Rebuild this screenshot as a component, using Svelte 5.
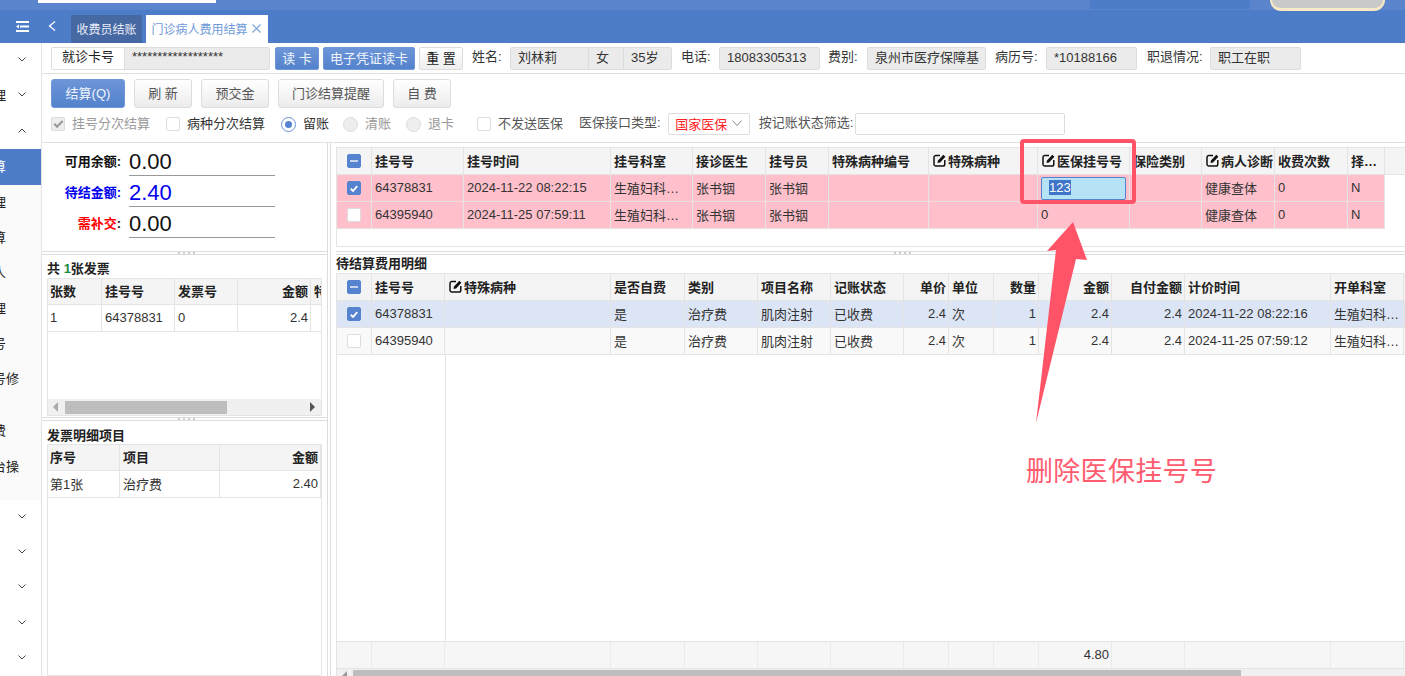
<script>
  const topCols = [
    { t: '挂号号' }, { t: '挂号时间' }, { t: '挂号科室' }, { t: '接诊医生' }, { t: '挂号员' },
    { t: '特殊病种编号' }, { t: '特殊病种', edit: true }, { t: '医保挂号号', edit: true },
    { t: '保险类别' }, { t: '病人诊断', edit: true }, { t: '收费次数' }, { t: '择…' }
  ];
  const topRows = [
    { checked: true, cells: ['64378831', '2024-11-22 08:22:15', '生殖妇科…', '张书铟', '张书铟', '', '', '@', '', '健康查体', '0', 'N'] },
    { checked: false, cells: ['64395940', '2024-11-25 07:59:11', '生殖妇科…', '张书铟', '张书铟', '', '', '0', '', '健康查体', '0', 'N'] }
  ];
  const feeCols = [
    { t: '挂号号' }, { t: '特殊病种', edit: true }, { t: '是否自费' }, { t: '类别' }, { t: '项目名称' }, { t: '记账状态' },
    { t: '单价', r: true }, { t: '单位' }, { t: '数量', r: true }, { t: '金额', r: true }, { t: '自付金额', r: true },
    { t: '计价时间' }, { t: '开单科室' }
  ];
  const feeRows = [
    { checked: true, cells: ['64378831', '', '是', '治疗费', '肌肉注射', '已收费', '2.4', '次', '1', '2.4', '2.4', '2024-11-22 08:22:16', '生殖妇科…'] },
    { checked: false, cells: ['64395940', '', '是', '治疗费', '肌肉注射', '已收费', '2.4', '次', '1', '2.4', '2.4', '2024-11-25 07:59:12', '生殖妇科…'] }
  ];
  const footer = ['', '', '', '', '', '', '', '', '', '', '4.80', '', '', ''];
  const invCols = [{ t: '张数' }, { t: '挂号号' }, { t: '发票号' }, { t: '金额', r: true }, { t: '特' }];
  const invRow = [{ t: '1' }, { t: '64378831' }, { t: '0' }, { t: '2.4', r: true }, { t: '' }];
  const detCols = [{ t: '序号' }, { t: '项目' }, { t: '金额', r: true }];
  const detRow = [{ t: '第1张' }, { t: '治疗费' }, { t: '2.40', r: true }];
  const side1 = [{ c: 'down' }, { c: 'down', t: '理' }, { c: 'up' }];
  const sub = ['理', '算', '人', '理', '号', '号修'];
  const side2 = [1, 2, 3, 4, 5];
</script>

{#snippet editIcon()}
  <svg class="edit" viewBox="0 0 13 13" width="13" height="13" aria-hidden="true">
    <path d="M7 1.500H3A1.800 1.800 0 0 0 1 3.300v6.900A1.800 1.800 0 0 0 3 12h7a1.800 1.800 0 0 0 1.800-1.800V6" fill="none" stroke="#111" stroke-width="1.500"/>
    <path d="M5 6.500 10.300.8l2.100 2-5.300 5.600-2.600.6z" fill="#111"/>
  </svg>
{/snippet}

{#snippet chk(state)}
  <span class="chk {state}">
    {#if state === 'on'}
      <svg viewBox="0 0 13 13" width="13" height="13" aria-hidden="true"><path d="M3 6.800 5.500 9.200 10 4" fill="none" stroke="#fff" stroke-width="2"/></svg>
    {:else if state === 'mix'}
      <i class="dash"></i>
    {/if}
  </span>
{/snippet}

{#snippet chev(dir)}
  <svg class="chev" viewBox="0 0 8 5" width="8" height="5" aria-hidden="true">
    {#if dir === 'up'}
      <path d="M.5 4.500 4 1l3.500 3.500" fill="none" stroke="#444" stroke-width="1"/>
    {:else}
      <path d="M.5.500 4 4 7.500.500" fill="none" stroke="#444" stroke-width="1"/>
    {/if}
  </svg>
{/snippet}

{#snippet split()}
  <div class="hsplit"><i></i><i></i><i></i><i></i></div>
{/snippet}

<div class="page">
  <header class="top">
    <div class="strip">
      <i class="sliver"></i>
      <i class="darkseg"></i>
      <i class="cream"></i>
    </div>
    <div class="tabsrow">
      <svg class="menu" viewBox="0 0 13 11" width="13" height="11" aria-hidden="true">
        <path d="M0 1h13M4 5.500h9M0 10h13" stroke="#fff" stroke-width="2"/>
        <path d="M3 3.500 0 5.500l3 2z" fill="#fff"/>
      </svg>
      <svg class="back" viewBox="0 0 8 10" width="8" height="10" aria-hidden="true"><path d="M7 .5 1.500 5 7 9.500" fill="none" stroke="#fff" stroke-width="1.300"/></svg>
      <div class="tab dark">收费员结账</div>
      <div class="tab on">门诊病人费用结算
        <svg viewBox="0 0 9 9" width="9" height="9" aria-hidden="true"><path d="M.5.500l8 8M8.500.500l-8 8" stroke="#7ba3dd" stroke-width="1.200"/></svg>
      </div>
    </div>
  </header>

  <div class="body">
    <nav class="side">
      {#each side1 as s}
        <div class="srow">
          {#if s.t}<span class="stext">{s.t}</span>{/if}
          {@render chev(s.c)}
        </div>
      {/each}
      <div class="subs">
        <div class="srow active"><span class="stext">算</span></div>
        {#each sub as s}
          <div class="srow"><span class="stext">{s}</span></div>
        {/each}
        <div class="sgap"></div>
        <div class="srow"><span class="stext">费</span></div>
        <div class="srow"><span class="stext">台操</span></div>
      </div>
      {#each side2 as _}
        <div class="srow">{@render chev('down')}</div>
      {/each}
    </nav>

    <main class="main">
      <div class="row1">
        <div class="group card">
          <span class="glabel">就诊卡号</span>
          <span class="gval stars">******************</span>
        </div>
        <button class="mini blue b44">读 卡</button>
        <button class="mini blue b92">电子凭证读卡</button>
        <button class="mini b44">重 置</button>
        <span class="lab l38 first">姓名:</span>
        <div class="group person">
          <span class="gval p1">刘林莉</span><span class="gval p2">女</span><span class="gval p3">35岁</span>
        </div>
        <span class="lab l38 next">电话:</span>
        <span class="gval solo f101">18083305313</span>
        <span class="lab l39 next8">费别:</span>
        <span class="gval solo f119">泉州市医疗保障基</span>
        <span class="lab l51 next">病历号:</span>
        <span class="gval solo f91">*10188166</span>
        <span class="lab l63 next10">职退情况:</span>
        <span class="gval solo f91">职工在职</span>
      </div>

      <div class="tools">
        <div class="btns">
          <button class="big blue b74">结算(Q)</button>
          <button class="big b58">刷 新</button>
          <button class="big b68">预交金</button>
          <button class="big b106">门诊结算提醒</button>
          <button class="big b58">自 费</button>
        </div>
        <div class="opts">
          <span class="opt gray m16">{@render chk('dis')}挂号分次结算</span>
          <span class="opt m16">{@render chk('off')}病种分次结算</span>
          <span class="opt m14"><i class="radio sel"></i>留账</span>
          <span class="opt gray m15"><i class="radio"></i>清账</span>
          <span class="opt gray m23"><i class="radio"></i>退卡</span>
          <span class="opt m16 mid">{@render chk('off')}不发送医保</span>
          <span class="lab mid">医保接口类型:</span>
          <span class="select">国家医保
            <svg viewBox="0 0 10 6" width="10" height="6" aria-hidden="true"><path d="M.5.500 5 5.500 9.500.500" fill="none" stroke="#888" stroke-width="1"/></svg>
          </span>
          <span class="lab mid fl">按记账状态筛选:</span>
          <span class="txtinput"></span>
        </div>
      </div>

      <div class="panes">
        <section class="left">
          <div class="amounts">
            <div class="amt"><span class="al">可用余额:</span><span class="av">0.00</span></div>
            <div class="amt bl"><span class="al">待结金额:</span><span class="av">2.40</span></div>
            <div class="amt rd"><span class="al"><em>需补交</em>:</span><span class="av">0.00</span></div>
          </div>
          {@render split()}

          <div class="inv">
            <h3>共 <b>1</b>张发票</h3>
            <div class="ltable">
              <div class="lrow lhead invg">
                {#each invCols as c}<span class="c" class:r={c.r}>{c.t}</span>{/each}
              </div>
              <div class="lrow invg">
                {#each invRow as c}<span class="c" class:r={c.r}>{c.t}</span>{/each}
              </div>
              <div class="lfill"></div>
              <div class="lscroll">
                <svg viewBox="0 0 6 10" width="6" height="10" aria-hidden="true"><path d="M5 0 0 5l5 5z" fill="#aaa"/></svg>
                <i class="thumb"></i>
                <svg class="ra" viewBox="0 0 6 10" width="6" height="10" aria-hidden="true"><path d="M1 0l5 5-5 5z" fill="#555"/></svg>
              </div>
            </div>
          </div>
          {@render split()}

          <div class="det">
            <h3>发票明细项目</h3>
            <div class="ltable grow">
              <div class="lrow lhead detg">
                {#each detCols as c}<span class="c" class:r={c.r}>{c.t}</span>{/each}
              </div>
              <div class="lrow detg">
                {#each detRow as c}<span class="c" class:r={c.r}>{c.t}</span>{/each}
              </div>
            </div>
          </div>
        </section>

        <div class="vsplit"></div>

        <section class="right">
          <div class="upper">
            <div class="grid-wrap">
              <div class="ghead topg">
                <span class="c cb">{@render chk('mix')}</span>
                {#each topCols as c}
                  <span class="c">{#if c.edit}{@render editIcon()}{/if}{c.t}</span>
                {/each}
              </div>
              {#each topRows as r}
                <div class="grow-r topg pink">
                  <span class="c cb">{@render chk(r.checked ? 'on' : 'off')}</span>
                  {#each r.cells as v}
                    {#if v === '@'}
                      <span class="c edit-cell"><span class="editor"><mark>123</mark></span></span>
                    {:else}
                      <span class="c">{v}</span>
                    {/if}
                  {/each}
                </div>
              {/each}
            </div>
          </div>
          {@render split()}

          <div class="lower">
            <h3>待结算费用明细</h3>
            <div class="fee">
              <div class="ghead feeg">
                <span class="c cb">{@render chk('mix')}</span>
                {#each feeCols as c}
                  <span class="c" class:r={c.r}>{#if c.edit}{@render editIcon()}{/if}{c.t}</span>
                {/each}
              </div>
              {#each feeRows as r}
                <div class="grow-r feeg" class:sel={r.checked} class:alt={!r.checked}>
                  <span class="c cb">{@render chk(r.checked ? 'on' : 'off')}</span>
                  {#each r.cells as v, i}
                    <span class="c" class:r={feeCols[i].r}>{v}</span>
                  {/each}
                </div>
              {/each}
              <div class="feefill"><i></i></div>
              <div class="gfoot feeg">
                {#each footer as v}
                  <span class="c r">{v}</span>
                {/each}
              </div>
              <div class="bscroll">
                <svg viewBox="0 0 5 5" width="5" height="5" aria-hidden="true"><path d="M5 0v5H0z" fill="#999"/></svg>
                <i></i>
              </div>
            </div>
          </div>
        </section>
      </div>
    </main>
  </div>

  <div class="mark-box"></div>
  <svg class="arrow" viewBox="0 0 1405 676" width="1405" height="676" aria-hidden="true">
    <path d="M1073 222 1087 260 1076 259 1036 423 1056 250 1047 251z" fill="#ff5468"/>
  </svg>
  <div class="note">删除医保挂号号</div>
</div>

<style>
  :global(body) { margin: 0; overflow: hidden; background: #fff; }
  * { box-sizing: border-box; }
  .page {
    position: relative; width: 1405px; height: 676px; overflow: hidden; display: flex; flex-direction: column;
    font-family: "Liberation Sans", "Noto Sans CJK SC", sans-serif; font-size: 13px; color: #333;
  }
  h3 { margin: 0; font-size: 13px; line-height: 16px; font-weight: 700; color: #222; }

  .top { height: 43px; flex: none; background: #4d7dc9; }
  .strip { height: 10px; background: #5a85cd; display: flex; align-items: flex-start; }
  .sliver { width: 178px; height: 3px; margin-left: 38px; background: #fff; }
  .darkseg { width: 160px; height: 9px; margin-left: 874px; background: #4d7dc9; }
  .cream {
    width: 115px; height: 11px; margin-left: 20px; background: #c9c9c9; border: 2px solid #f7e9c5; border-top: 0; border-bottom-width: 3px;
    border-radius: 0 0 18px 18px; position: relative; z-index: 1;
  }
  .tabsrow { height: 33px; display: flex; align-items: flex-end; position: relative; }
  .menu { margin: 0 0 11px 16px; }
  .back { margin: 0 0 12px 19px; }
  .tab { height: 28px; display: flex; align-items: center; justify-content: center; font-size: 12px; padding-bottom: 2px; }
  .tab.dark { width: 71px; margin-left: 15px; background: #4668a3; color: #e6edf8; }
  .tab.on { width: 122px; margin-left: 4px; gap: 4px; background: #fff; color: #6f9ad8; padding-right: 2px; }

  .body { flex: 1; display: flex; min-height: 0; }
  .side { width: 42px; flex: none; border-right: 1px solid #e4e4e4; overflow: hidden; }
  .srow { height: 35.25px; display: flex; align-items: center; position: relative; color: #222; }
  .chev { margin-left: 18px; transform: translateY(-1px); }
  .stext { margin-left: -7px; margin-bottom: 2px; white-space: nowrap; font-size: 13px; }
  .srow .chev { position: absolute; left: 0; }
  .subs { height: 351px; background: #fafafa; }
  .subs .srow.active { background: #4d7dc9; color: #fff; height: 36px; }
  .sgap { height: 17px; }

  .main { flex: 1; min-width: 0; display: flex; flex-direction: column; }
  .row1 { height: 31px; flex: none; display: flex; padding: 4px 0 0 9px; border-bottom: 1px solid #e0e0e0; gap: 0; }
  .group { display: flex; height: 23px; }
  .card { width: 219px; border: 1px solid #ddd; border-radius: 2px; }
  .glabel { width: 73px; background: #fff; text-align: center; line-height: 18px; border-right: 1px solid #ddd; color: #222; }
  .gval { background: #ebebeb; line-height: 20px; padding-left: 7px; color: #333; white-space: nowrap; overflow: hidden; }
  .stars { flex: 1; font-size: 13px; line-height: 17px; }
  .mini {
    height: 23px; padding: 0 0 2px; border: 1px solid #ddd; border-radius: 2px; font: inherit; color: #222;
    background: linear-gradient(#fff, #eee); margin-left: 4px;
  }
  .mini.blue, .big.blue { background: linear-gradient(#6d95d8, #5382cc); border-color: #6f98d9; color: #f0f5fc; }
  .b44 { width: 44px; } .b92 { width: 92px; }
  .row1 .mini:first-of-type { margin-left: 5px; }
  .lab { color: #333; white-space: nowrap; height: 23px; line-height: 19px; }
  .l38 { width: 38px; } .l39 { width: 39px; } .l51 { width: 51px; } .l63 { width: 63px; }
  .first { margin-left: 9px; } .next { margin-left: 9px; } .next8 { margin-left: 8px; } .next10 { margin-left: 10px; }
  .person { width: 162px; border: 1px solid #ddd; border-radius: 2px; }
  .person .gval { line-height: 20px; border-right: 1px solid #ddd; }
  .person .gval:last-child { border-right: 0; }
  .p1 { width: 78px; } .p2 { width: 35px; } .p3 { flex: 1; }
  .solo { height: 23px; border: 1px solid #ddd; border-radius: 2px; }
  .f101 { width: 101px; } .f119 { width: 119px; } .f91 { width: 91px; }

  .tools { height: 69px; flex: none; padding: 5px 0 0 9px; border-bottom: 1px solid #e0e0e0; }
  .btns { display: flex; gap: 9px; height: 29px; }
  .big {
    height: 29px; padding: 0 0 2px; border: 1px solid #ddd; border-radius: 3px; font: inherit; color: #555;
    background: linear-gradient(#fff, #ececec);
  }
  .b74 { width: 74px; } .b58 { width: 58px; } .b68 { width: 68px; } .b106 { width: 106px; }
  .opts { display: flex; align-items: center; height: 22px; margin-top: 5px; }
  .opt { display: flex; align-items: center; gap: 7px; white-space: nowrap; color: #333; line-height: 20px; }
  .opt.gray { color: #999; }
  .opt.mid, .lab.mid { color: #555; line-height: 20px; height: 22px; }
  .m14 { margin-right: 14px; } .m15 { margin-right: 15px; } .m16 { margin-right: 16px; } .m23 { margin-right: 23px; }
  .chk {
    width: 14px; height: 14px; flex: none; display: inline-flex; align-items: center; justify-content: center;
    border: 1px solid #ddd; border-radius: 2px; background: #fff;
  }
  .chk.on, .chk.mix { background: #5683cf; border-color: #5683cf; }
  .chk.dis { background: #eee; }
  .chk.dis::after { content: ""; width: 7px; height: 3px; border: solid #999; border-width: 0 0 2px 2px; transform: rotate(-45deg) translate(1px, -1px); }
  .dash { width: 8px; height: 2px; background: #c6d5ee; }
  .radio { width: 15px; height: 15px; flex: none; border: 1px solid #ddd; border-radius: 50%; background: #eee; }
  .radio.sel { background: #fff; border-color: #6b93d6; display: flex; align-items: center; justify-content: center; }
  .radio.sel::after { content: ""; width: 7px; height: 7px; border-radius: 50%; background: #5683cf; }
  .select {
    width: 82px; height: 22px; margin-left: 7px; padding-bottom: 2px; display: flex; align-items: center; justify-content: center; gap: 5px;
    border: 1px solid #ddd; border-radius: 2px; color: #f22;
  }
  .fl { margin-left: 9px; }
  .txtinput { width: 210px; height: 22px; margin-left: 2px; border: 1px solid #ddd; border-radius: 2px; }

  .panes { flex: 1; min-height: 0; display: flex; }
  .left { width: 285px; flex: none; display: flex; flex-direction: column; }
  .amounts { height: 108px; flex: none; padding-top: 2px; }
  .amt { height: 31px; display: flex; align-items: flex-end; }
  .al { width: 79px; text-align: right; font-weight: 700; color: #111; padding-bottom: 6px; }
  .al em { font-style: normal; color: #f00; }
  .av { width: 146px; margin-left: 8px; font-size: 22px; line-height: 27px; border-bottom: 1px solid #999; color: #111; }
  .amt.bl .al, .amt.bl .av { color: #00e; }
  .hsplit {
    height: 4px; flex: none; border-top: 1px solid #ddd; border-bottom: 1px solid #ddd;
    display: flex; justify-content: center; gap: 3px; padding-left: 3px;
  }
  .right .hsplit { padding-left: 64px; }
  .hsplit i { width: 2px; background: #ccc; }
  .inv { height: 162px; flex: none; padding: 6px 5px 1px; display: flex; flex-direction: column; }
  .inv h3 { height: 17px; }
  .inv h3 b { color: #1a8a3a; }
  .ltable { flex: 1; min-height: 0; display: flex; flex-direction: column; border: 1px solid #e4e4e4; border-radius: 1px; overflow: hidden; }
  .lrow { height: 27px; flex: none; display: grid; border-bottom: 1px solid #e4e4e4; align-items: stretch; color: #333; }
  .lhead { height: 26px; background: #f4f4f4; color: #222; font-weight: 700; }
  .lrow .c:first-child { padding-left: 2px; }
  .invg { grid-template-columns: 54px 73px 63px 73px 12px; }
  .detg { grid-template-columns: 72px 100px 101px; }
  .lfill { flex: 1; }
  .lscroll { height: 16px; flex: none; background: #f0f0f0; display: flex; align-items: center; padding-left: 5px; position: relative; }
  .thumb { width: 162px; height: 13px; margin-left: 6px; background: #bdbdbd; }
  .ra { position: absolute; right: 6px; }
  .det { flex: 1; min-height: 0; padding: 7px 5px 0; display: flex; flex-direction: column; }
  .det h3 { height: 16px; }
  .vsplit { width: 4px; flex: none; border-left: 1px solid #ddd; border-right: 1px solid #ddd; }

  .right { flex: 1; min-width: 0; display: flex; flex-direction: column; padding-left: 5px; }
  .upper { height: 108px; flex: none; padding-top: 4px; }
  .grid-wrap { height: 100px; border-left: 1px solid #e4e4e4; border-bottom: 1px solid #e4e4e4; border-top: 1px solid #e4e4e4; }
  .ghead { height: 27px; background: #f4f4f4; display: grid; color: #222; font-weight: 700; border-bottom: 1px solid #e4e4e4; }
  .grow-r { height: 27px; display: grid; border-bottom: 1px solid #e4e4e4; color: #333; }
  .topg { grid-template-columns: 35px 92px 147px 82px 73px 63px 100px 109px 92px 72px 73px 73px 37px; }
  .pink { background: #ffc0cb; width: 1048px; border-bottom-color: #e8dfe2; }
  .c {
    display: flex; align-items: center; gap: 2px; padding: 0 3px 1px; white-space: nowrap; overflow: hidden; min-width: 0;
    border-right: 1px solid #e4e4e4;
  }
  .ghead .c, .lhead .c { padding-bottom: 2px; }
  .c.r { justify-content: flex-end; padding-right: 2px; }
  .c.cb { justify-content: center; padding: 0; }
  .edit { flex: none; margin-left: 1px; }
  .edit-cell { padding: 0; justify-content: center; }
  .editor { width: 85px; height: 23px; display: flex; align-items: center; padding: 0 0 2px 7px; background: #b6e2f5; border: 1px solid #5683cf; border-radius: 2px; }
  mark { background: #3f75c8; color: #fff; }

  .lower { flex: 1; min-height: 0; display: flex; flex-direction: column; }
  .lower h3 { height: 18px; padding-top: 1px; }
  .fee { flex: 1; min-height: 0; display: flex; flex-direction: column; border-left: 1px solid #e4e4e4; border-top: 1px solid #e4e4e4; }
  .feeg { grid-template-columns: 35px 73px 166px 74px 73px 73px 73px 45px 45px 45px 73px 73px 146px 73px; }
  .sel { background: #dce5f5; }
  .alt { background: #f9f9f9; }
  .fee .ghead, .fee .grow-r { flex: none; }
  .feefill { flex: 1; min-height: 0; }
  .feefill i { display: block; width: 109px; height: 100%; border-right: 1px solid #e4e4e4; }
  .gfoot { height: 28px; flex: none; display: grid; background: #f6f6f6; border-top: 1px solid #e4e4e4; border-bottom: 1px solid #e4e4e4; color: #333; }
  .gfoot .c { border-right-color: #ebebeb; }
  .bscroll { height: 7px; flex: none; background: #f0f0f0; display: flex; align-items: flex-end; padding-left: 5px; }
  .bscroll i { width: 888px; height: 6px; margin-left: 6px; background: #bdbdbd; }

  .mark-box { position: absolute; left: 1020px; top: 139px; width: 116px; height: 65px; border: 4px solid #ff5468; border-radius: 4px; }
  .arrow { position: absolute; left: 0; top: 0; pointer-events: none; }
  .note { position: absolute; left: 1026px; top: 453px; font-size: 27px; line-height: 38px; letter-spacing: .3px; color: #ff5c70; font-weight: 400; white-space: nowrap; }
</style>
